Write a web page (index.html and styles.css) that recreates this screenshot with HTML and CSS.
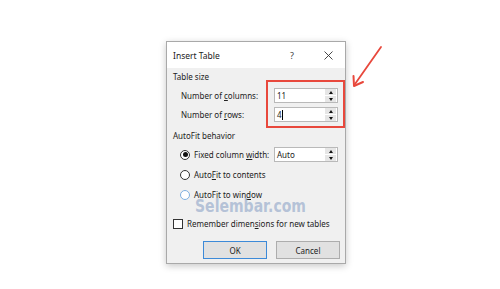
FILE: index.html
```html
<!DOCTYPE html>
<html>
<head>
<meta charset="utf-8">
<link rel="stylesheet" href="styles.css">
</head>
<body>
<div class="page">
  <div class="dialog">
    <div class="titlebar">
      <span class="title">Insert Table</span>
      <span class="help">?</span>
      <span class="close"><svg width="9" height="9" viewBox="0 0 9 9"><path d="M0.5 0.5L8.5 8.5M8.5 0.5L0.5 8.5" stroke="#333" stroke-width="0.9" fill="none"/></svg></span>
    </div>
    <div class="body">
      <div class="group">Table size</div>
      <div class="row">
        <span class="label">Number of <u>c</u>olumns:</span>
        <div class="spin"><span class="val">11</span><span class="arrows"><i class="up"></i><i class="down"></i></span></div>
      </div>
      <div class="row">
        <span class="label">Number of <u>r</u>ows:</span>
        <div class="spin"><span class="val">4<b class="caret"></b></span><span class="arrows"><i class="up"></i><i class="down"></i></span></div>
      </div>
      <div class="group group2">AutoFit behavior</div>
      <div class="row radio-row first">
        <span class="radio checked"></span>
        <span class="rlabel">Fixed column <u>w</u>idth:</span>
        <div class="spin spin-auto"><span class="val">Auto</span><span class="arrows"><i class="up"></i><i class="down"></i></span></div>
      </div>
      <div class="row radio-row">
        <span class="radio"></span>
        <span class="rlabel">Auto<u>F</u>it to contents</span>
      </div>
      <div class="row radio-row">
        <span class="radio hover"></span>
        <span class="rlabel">AutoFit to win<u>d</u>ow</span>
      </div>
      <div class="row check-row">
        <span class="check"></span>
        <span class="rlabel">Remember dimen<u>s</u>ions for new tables</span>
      </div>
      <div class="buttons">
        <span class="btn ok">OK</span>
        <span class="btn">Cancel</span>
      </div>
    </div>
  </div>
  <div class="watermark">Selembar.com</div>
  <div class="highlight"></div>
  <svg class="arrow" width="40" height="50" viewBox="0 0 40 50">
    <path d="M34 3L8 40" stroke="#e8483c" stroke-width="1.8" fill="none" stroke-linecap="round"/>
    <path d="M6.5 32L7 42L16 38" stroke="#e8483c" stroke-width="2" fill="none" stroke-linecap="round" stroke-linejoin="round"/>
  </svg>
</div>
</body>
</html>
```
FILE: styles.css
```css
html, body {
  margin: 0;
  padding: 0;
  background: #ffffff;
}
.page {
  position: relative;
  width: 500px;
  height: 289px;
  padding: 41px 0 0 166px;
  box-sizing: border-box;
  font-family: "Noto Sans", "DejaVu Sans", sans-serif;
  font-size: 8px;
  color: #222;
}
.dialog {
  width: 180px;
  height: 223px;
  box-sizing: border-box;
  border: 1px solid #a9a9a9;
  background: #f0f0f0;
  box-shadow: 0 2px 7px rgba(0,0,0,0.22);
  display: flex;
  flex-direction: column;
}
.titlebar {
  height: 26px;
  background: #ffffff;
  display: flex;
  align-items: center;
  padding-left: 6px;
  font-size: 8.5px;
}
.title { width: 117px; }
.help { width: 34px; color: #444; font-size: 9px; }
.close { display: flex; align-items: center; }
.body {
  padding: 2px 5px 0 6px;
  display: flex;
  flex-direction: column;
}
.group {
  height: 14px;
  line-height: 14px;
}
.group2 { margin-top: 7px; }
.row {
  display: flex;
  align-items: center;
  height: 15px;
  margin-top: 4px;
}
.label {
  width: 101px;
  padding-left: 8px;
  box-sizing: border-box;
}
u { text-decoration: underline; text-underline-offset: 1px; }
.spin {
  width: 64px;
  height: 15px;
  box-sizing: border-box;
  border: 1px solid #b9b9b9;
  background: #fff;
  display: flex;
  align-items: stretch;
}
.val {
  flex: 1;
  padding-left: 2px;
  line-height: 13px;
  display: flex;
  align-items: center;
}
.caret {
  display: inline-block;
  width: 1px;
  height: 10px;
  background: #000;
}
.arrows {
  width: 11px;
  display: flex;
  flex-direction: column;
  gap: 1px;
  padding: 0 1px 0 0;
}
.arrows i {
  flex: 1;
  background: #e6e6e6;
  display: flex;
  align-items: center;
  justify-content: center;
}
.arrows i::after {
  content: "";
  border-left: 2.5px solid transparent;
  border-right: 2.5px solid transparent;
}
.arrows .up::after { border-bottom: 3px solid #111; }
.arrows .down::after { border-top: 3px solid #111; }
.radio-row { margin-top: 5px; }
.radio-row.first { margin-top: 4px; }
.radio {
  width: 10px;
  height: 10px;
  box-sizing: border-box;
  border: 1px solid #333;
  border-radius: 50%;
  background: #fff;
  margin-left: 7px;
  display: flex;
  align-items: center;
  justify-content: center;
}
.radio.checked::after {
  content: "";
  width: 5px;
  height: 5px;
  border-radius: 50%;
  background: #111;
}
.radio.hover { border-color: #7fb0e0; }
.rlabel { margin-left: 4px; }
.radio-row.first .rlabel { width: 80px; }
.check-row { margin-top: 14px; }
.check {
  width: 10px;
  height: 10px;
  box-sizing: border-box;
  border: 1px solid #333;
  background: #fff;
}
.buttons {
  display: flex;
  justify-content: flex-end;
  gap: 9px;
  margin-top: 10px;
}
.btn {
  width: 64px;
  height: 18px;
  box-sizing: border-box;
  border: 1px solid #adadad;
  background: #e1e1e1;
  display: flex;
  align-items: center;
  justify-content: center;
}
.btn.ok { border-color: #3d8ad8; }
.watermark {
  position: absolute;
  left: 195px;
  top: 200px;
  height: 12px;
  line-height: 12px;
  font-family: "DejaVu Sans", sans-serif;
  font-weight: bold;
  font-size: 18px;
  color: rgba(165, 182, 208, 0.8);
  transform: scaleX(0.78);
  transform-origin: left center;
}
.highlight {
  position: absolute;
  left: 266px;
  top: 80px;
  width: 79px;
  height: 48px;
  box-sizing: border-box;
  border: 2px solid #e8483c;
}
.arrow {
  position: absolute;
  left: 347px;
  top: 44px;
}
```
